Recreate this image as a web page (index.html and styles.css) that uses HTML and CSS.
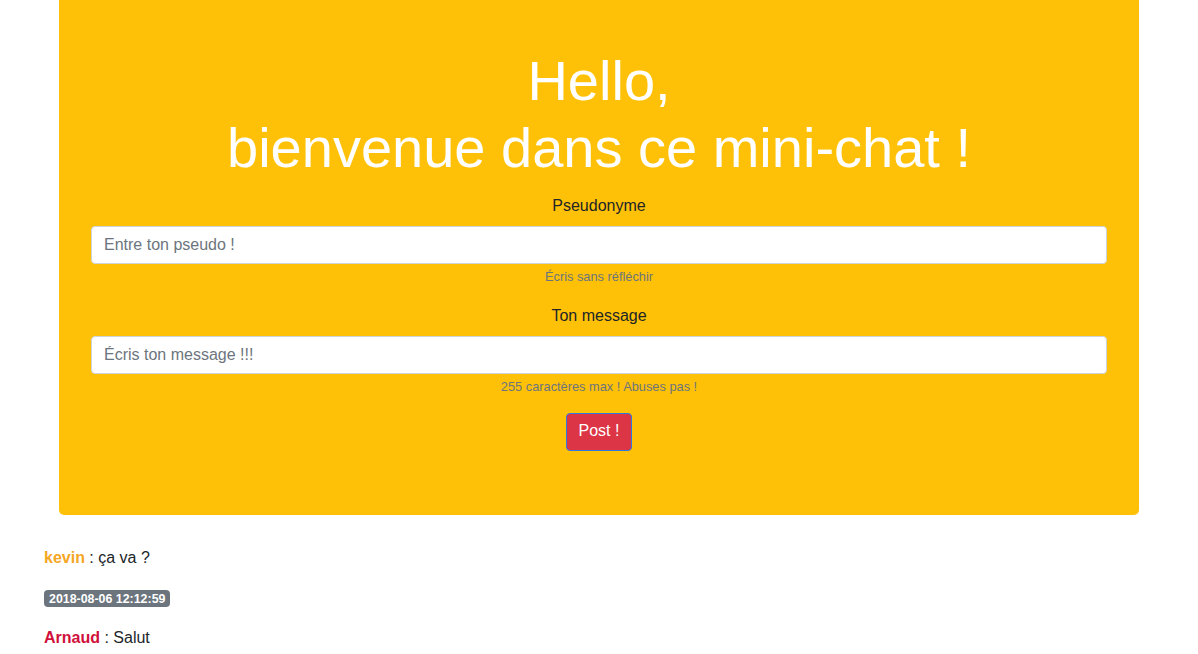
FILE: index.html
```html
<!DOCTYPE html>
<html lang="fr">
<head>
<meta charset="utf-8">
<title>Mini-chat</title>
<link rel="stylesheet" href="styles.css">
</head>
<body>
<div class="jumbotron">
  <h1 class="title">Hello,<br>bienvenue dans ce mini-chat !</h1>
  <form class="chat-form">
    <div class="form-group">
      <label class="field-label" for="pseudo">Pseudonyme</label>
      <input class="field-input" id="pseudo" type="text" placeholder="Entre ton pseudo !">
      <small class="field-help">Écris sans réfléchir</small>
    </div>
    <div class="form-group">
      <label class="field-label" for="message">Ton message</label>
      <input class="field-input" id="message" type="text" placeholder="Écris ton message !!!">
      <small class="field-help">255 caractères max ! Abuses pas !</small>
    </div>
    <div class="actions">
      <button class="btn-post" type="button">Post !</button>
    </div>
  </form>
</div>
<div class="messages">
  <p class="msg"><strong class="nick nick-kevin">kevin</strong> : ça va ?</p>
  <p class="stamp"><span class="badge">2018-08-06 12:12:59</span></p>
  <p class="msg"><strong class="nick nick-arnaud">Arnaud</strong> : Salut</p>
</div>
</body>
</html>
```
FILE: styles.css
```css
* { box-sizing: border-box; }
html, body { margin: 0; padding: 0; }
body {
  font-family: "Liberation Sans", Arial, sans-serif;
  font-size: 16px;
  line-height: 1.5;
  color: #212529;
  background: #fff;
  overflow: hidden;
}
.jumbotron {
  width: 1080px;
  margin: 0 59px 31px;
  background: #ffc107;
  border-radius: 0 0 5px 5px;
  padding: 47px 32px 64px;
  text-align: center;
}
.title {
  margin: 0 0 13px;
  font-size: 56px;
  font-weight: 300;
  line-height: 1.2;
  color: #fff;
}
.form-group { margin-bottom: 17px; }
.field-label {
  display: block;
  margin-bottom: 8px;
  line-height: 24px;
}
.field-input {
  display: block;
  width: 100%;
  height: 38px;
  padding: 6px 12px;
  font-family: inherit;
  font-size: 16px;
  line-height: 1.5;
  color: #495057;
  background: #fff;
  border: 1px solid #ced4da;
  border-radius: 4px;
  outline: none;
}
.field-input::placeholder { color: #6c757d; opacity: 1; }
.field-help {
  display: block;
  margin-top: 3px;
  font-size: 12.8px;
  line-height: 19.2px;
  color: #6c757d;
}
.actions { display: flex; justify-content: center; }
.btn-post {
  height: 38px;
  padding: 5px 12px 7px;
  font-family: inherit;
  font-size: 16px;
  line-height: 1.5;
  color: #fff;
  background: #dc3545;
  border: 1px solid #2a7ae2;
  border-radius: 4px;
  cursor: pointer;
}
.messages { padding-left: 44px; }
.msg { margin: 0 0 16px; line-height: 24px; }
.nick { font-weight: 700; }
.nick-kevin { color: #f5a623; }
.nick-arnaud { color: #d0103a; }
.stamp { margin: 0 0 16px; line-height: 24px; }
.badge {
  display: inline-block;
  padding: 3px 5px 2px;
  font-size: 12.4px;
  font-weight: 700;
  line-height: 1;
  color: #fff;
  background: #6c757d;
  border-radius: 4px;
  vertical-align: baseline;
}
```
